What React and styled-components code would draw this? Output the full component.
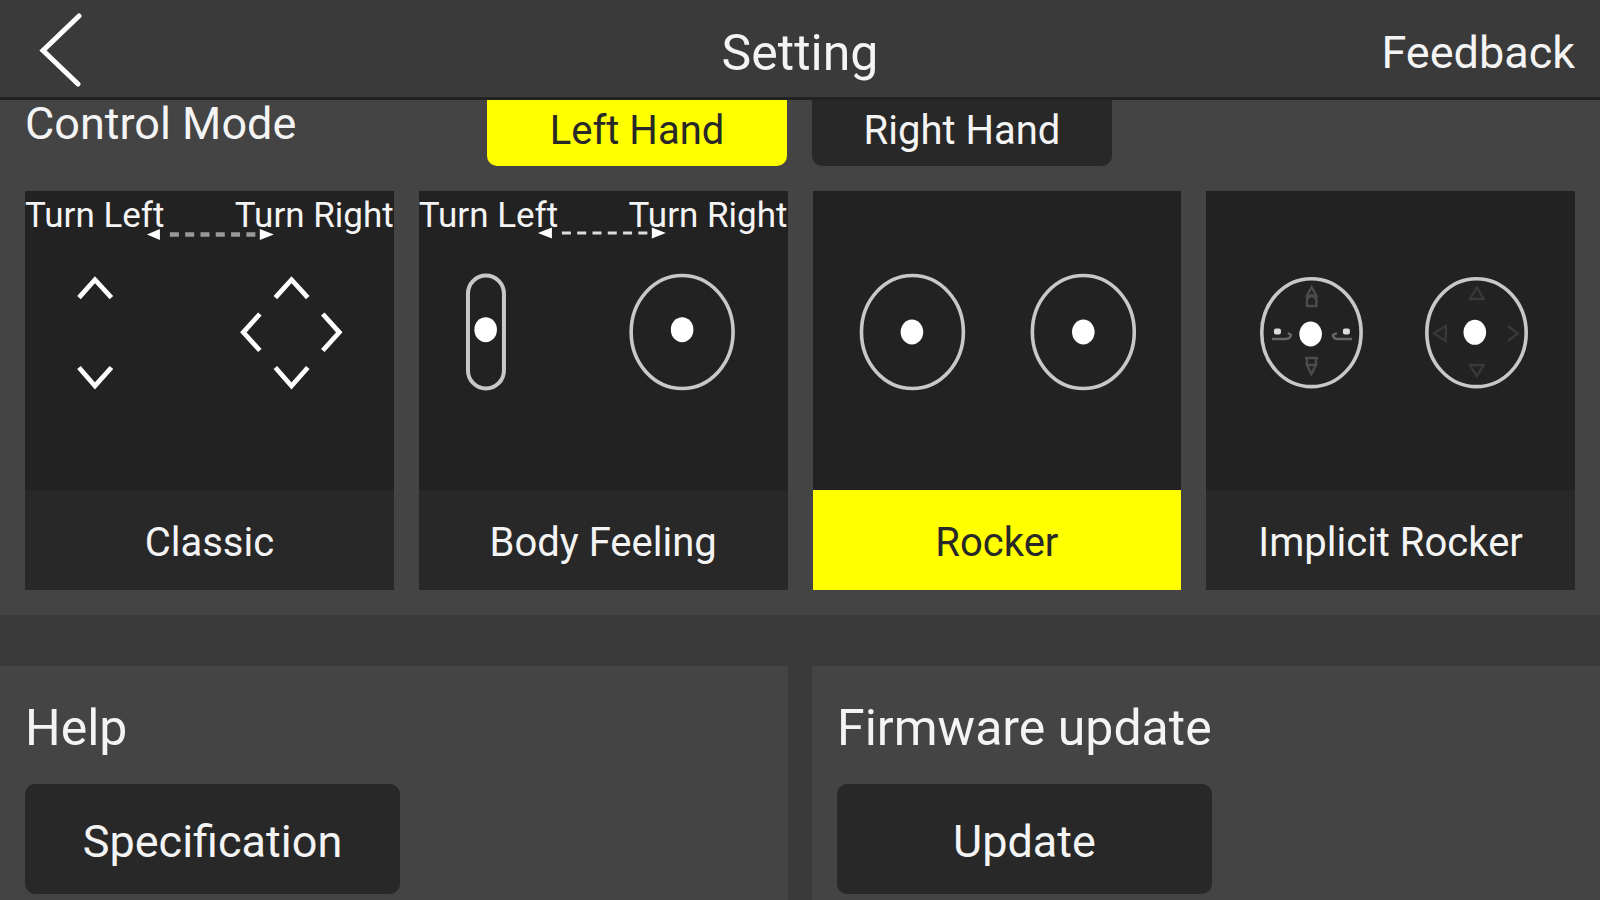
import React, { useState } from "react";
import styled, { createGlobalStyle } from "styled-components";

const hands = ["Left Hand", "Right Hand"];

const modes = [
  { name: "Classic", turns: true, Drawing: ClassicDrawing },
  { name: "Body Feeling", turns: true, Drawing: BodyFeelingDrawing },
  { name: "Rocker", turns: false, Drawing: RockerDrawing },
  { name: "Implicit Rocker", turns: false, Drawing: ImplicitRockerDrawing },
];

function App() {
  const [hand, setHand] = useState("Left Hand");
  const [mode, setMode] = useState("Rocker");

  return (
    <>
      <GlobalStyle />
      <Header>
        <BackButton type="button" aria-label="Back">
          <svg width="44" height="76" viewBox="0 0 44 76" fill="none">
            <path
              d="M40 5 4 39.5 39 73"
              stroke="#fff"
              strokeWidth="5"
              strokeLinecap="round"
            />
          </svg>
        </BackButton>
        <Title>Setting</Title>
        <FeedbackLink href="#feedback">Feedback</FeedbackLink>
      </Header>

      <ControlPanel>
        <ControlRow>
          <ControlLabel>Control Mode</ControlLabel>
          {hands.map((name) => (
            <HandButton
              key={name}
              type="button"
              $active={hand === name}
              onClick={() => setHand(name)}
            >
              {name}
            </HandButton>
          ))}
        </ControlRow>

        <ModeGrid>
          {modes.map(({ name, turns, Drawing }) => (
            <ModeCard key={name} type="button" onClick={() => setMode(name)}>
              <Preview>
                {turns && (
                  <Turns>
                    <span>Turn Left</span>
                    <span>Turn Right</span>
                  </Turns>
                )}
                <Drawing />
              </Preview>
              <ModeName $active={mode === name}>{name}</ModeName>
            </ModeCard>
          ))}
        </ModeGrid>
      </ControlPanel>

      <BottomPanels>
        <Panel>
          <PanelTitle>Help</PanelTitle>
          <PanelButton type="button">Specification</PanelButton>
        </Panel>
        <Panel>
          <PanelTitle>Firmware update</PanelTitle>
          <PanelButton type="button">Update</PanelButton>
        </Panel>
      </BottomPanels>
    </>
  );
}

export default App;

function ClassicDrawing() {
  return (
    <Canvas viewBox="0 0 369 299">
      <path d="M122 43.5 135 38V49ZM249 43.5 235 38V49Z" fill="#fff" />
      <path
        d="M145 43.5H234"
        stroke="#999"
        strokeWidth="4.5"
        strokeDasharray="9 6.3"
      />
      <g stroke="#fff" strokeWidth="4.8">
        <path d="M54 106.5 70 88.7 86.5 106.5" />
        <path d="M54 176.5 70 195 86.5 176.5" />
        <path d="M250.5 106.5 266.7 88.7 283 106.5" />
        <path d="M250.5 176.5 266.7 195 283 176.5" />
        <path d="M235 123 218.5 141.3 235 159.5" />
        <path d="M298 123 314.5 141.3 298 159.5" />
      </g>
    </Canvas>
  );
}

function BodyFeelingDrawing() {
  return (
    <Canvas viewBox="0 0 369 299">
      <path d="M119 42 133 36.5V47.5ZM247 42 233 36.5V47.5Z" fill="#fff" />
      <path
        d="M143 42H232"
        stroke="#ddd"
        strokeWidth="3"
        strokeDasharray="9 6.3"
      />
      <rect
        x="49"
        y="84.5"
        width="36"
        height="113"
        rx="18"
        stroke="#c8c8c8"
        strokeWidth="4"
      />
      <ellipse cx="66.7" cy="138.7" rx="11.3" ry="12.5" fill="#fff" />
      <Stick cx={263.3} dotX={263.3} dotY={138.7} />
    </Canvas>
  );
}

function RockerDrawing() {
  return (
    <Canvas viewBox="0 0 369 299">
      <Stick cx={99.5} dotX={99} dotY={141} />
      <Stick cx={270.5} dotX={270.5} dotY={141} />
    </Canvas>
  );
}

function ImplicitRockerDrawing() {
  return (
    <Canvas viewBox="0 0 369 299">
      <Stick cx={105.5} cy={141.7} rx={49.7} ry={54} dotX={104.7} dotY={143} />
      <Stick cx={270.7} cy={141.7} rx={49.7} ry={54} dotX={269} dotY={141.3} />
      <g stroke="#4c4c4c" strokeWidth="2.4">
        <path d="M101 105 105.7 96 110.5 105ZM101 115V108L105.7 104 110.5 108V115Z" />
        <path d="M99 167H112M101 167V174H110V167M101 174 105.5 183 110 174Z" />
      </g>
      <g stroke="#666" strokeWidth="2.4">
        <path d="M66 148H80Q85 147 85 144L82 142" />
        <path d="M146 148H131Q127 147 127 144L131 142" />
      </g>
      <rect x="68" y="137.5" width="7" height="6" rx="2" fill="#ddd" />
      <rect x="137" y="137.5" width="7" height="6" rx="2" fill="#ddd" />
      <g stroke="#383838" strokeWidth="2.4">
        <path d="M264 108 271 96.5 278 108Z" />
        <path d="M264 174H278L271 185Z" />
        <path d="M240 135V150L228 142.5Z" />
        <path d="M302 135 312 142.5 302 150" />
      </g>
    </Canvas>
  );
}

function Stick({ cx, cy = 141, rx = 51, ry = 56.5, dotX, dotY }) {
  return (
    <>
      <ellipse
        cx={cx}
        cy={cy}
        rx={rx}
        ry={ry}
        stroke="#c8c8c8"
        strokeWidth="3.6"
      />
      <ellipse cx={dotX} cy={dotY} rx="11.3" ry="12.5" fill="#fff" />
    </>
  );
}

const GlobalStyle = createGlobalStyle`
  * {
    box-sizing: border-box;
  }

  body {
    margin: 0;
    background-color: #3a3a3a;
    color: #f4f4f4;
    font-family: Roboto, "Liberation Sans", sans-serif;
  }

  #root {
    display: flex;
    flex-direction: column;
    min-height: 100vh;
  }

  button {
    border: none;
    padding: 0;
    color: inherit;
    font-family: inherit;
    cursor: pointer;
  }
`;

const Header = styled.header`
  display: grid;
  grid-template-columns: 1fr auto 1fr;
  align-items: center;
  height: 100px;
  padding: 0 25px;
  border-bottom: 3px solid #222;
`;

const BackButton = styled.button`
  justify-self: start;
  padding: 0 14px;
  background: none;

  > svg {
    display: block;
  }
`;

const Title = styled.h1`
  margin: 0;
  padding-top: 8px;
  font-size: 50px;
  font-weight: 400;
  line-height: 60px;
`;

const FeedbackLink = styled.a`
  justify-self: end;
  padding-top: 8px;
  color: inherit;
  font-size: 45px;
  line-height: 60px;
  text-decoration: none;
`;

const ControlPanel = styled.section`
  padding: 0 25px 25px;
  background-color: #444;
`;

const ControlRow = styled.div`
  display: grid;
  grid-template-columns: 437fr 300fr 300fr 438fr;
  column-gap: 25px;
  height: 91px;
`;

const ControlLabel = styled.h2`
  margin: 0;
  font-size: 45px;
  font-weight: 400;
  line-height: 48px;
`;

const HandButton = styled.button`
  height: 66px;
  padding-bottom: 4px;
  border-radius: 0 0 10px 10px;
  background-color: ${({ $active }) => ($active ? "#ff0" : "#282828")};
  color: ${({ $active }) => ($active ? "#282828" : "#f4f4f4")};
  font-size: 40px;
  line-height: 60px;
`;

const ModeGrid = styled.div`
  display: grid;
  grid-template-columns: repeat(4, 1fr);
  gap: 25px;
`;

const ModeCard = styled.button`
  display: flex;
  flex-direction: column;
  background-color: #222;
`;

const Preview = styled.span`
  display: grid;
  width: 100%;

  > * {
    grid-area: 1 / 1;
  }
`;

const Turns = styled.span`
  display: flex;
  justify-content: space-between;
  font-size: 35px;
  line-height: 50px;
`;

const Canvas = styled.svg`
  display: block;
  width: 100%;
  height: 299px;
  fill: none;
`;

const ModeName = styled.span`
  width: 100%;
  padding-top: 6px;
  background-color: ${({ $active }) => ($active ? "#ff0" : "#282828")};
  color: ${({ $active }) => ($active ? "#282828" : "#f4f4f4")};
  font-size: 40px;
  line-height: 94px;
`;

const BottomPanels = styled.div`
  display: grid;
  flex: 1;
  grid-template-columns: 1fr 1fr;
  column-gap: 24px;
  margin-top: 51px;
`;

const Panel = styled.section`
  padding: 32px 25px 6px;
  background-color: #444;
`;

const PanelTitle = styled.h2`
  margin: 0 0 26px;
  font-size: 50px;
  font-weight: 400;
  line-height: 60px;
`;

const PanelButton = styled.button`
  width: 375px;
  max-width: 100%;
  height: 110px;
  padding-top: 4px;
  border-radius: 10px;
  background-color: #282828;
  font-size: 45px;
`;
